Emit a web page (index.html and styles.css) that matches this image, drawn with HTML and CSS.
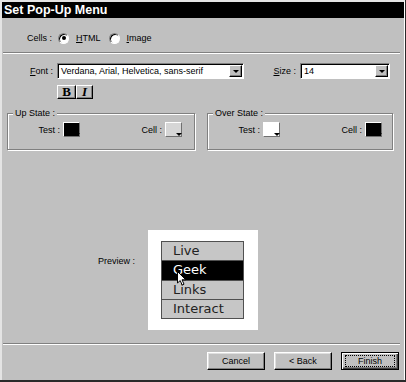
FILE: index.html
```html
<!DOCTYPE html>
<html lang="en">

<head>
    <meta charset="UTF-8">
    <title>Set Pop-Up Menu</title>
    <link rel="stylesheet" href="styles.css">
</head>

<body>
    <div class="dialog">
        <div class="title-bar">Set Pop-Up Menu</div>

        <div class="cells-row">
            <span class="cells-label">Cells :</span>
            <label class="radio-option">
                <span class="radio checked"></span><u>H</u>TML
            </label>
            <label class="radio-option">
                <span class="radio"></span><u>I</u>mage
            </label>
        </div>

        <div class="separator"></div>

        <div class="font-row">
            <span class="font-label"><u>F</u>ont :</span>
            <div class="combo font-combo">
                <span class="combo-text">Verdana, Arial, Helvetica, sans-serif</span>
                <span class="combo-btn"></span>
            </div>
            <span class="size-label"><u>S</u>ize :</span>
            <div class="combo size-combo">
                <span class="combo-text">14</span>
                <span class="combo-btn"></span>
            </div>
        </div>

        <div class="style-row">
            <span class="style-btn bold">B</span>
            <span class="style-btn italic">I</span>
        </div>

        <div class="states">
            <div class="group up-state">
                <div class="group-title">Up State :</div>
                <div class="swatch-row">
                    <span class="test-label">Test :</span>
                    <span class="swatch swatch-black"></span>
                    <span class="cell-label">Cell :</span>
                    <span class="swatch swatch-grey"></span>
                </div>
            </div>
            <div class="group over-state">
                <div class="group-title">Over State :</div>
                <div class="swatch-row">
                    <span class="test-label">Test :</span>
                    <span class="swatch swatch-white"></span>
                    <span class="cell-label">Cell :</span>
                    <span class="swatch swatch-black"></span>
                </div>
            </div>
        </div>

        <div class="preview-row">
            <span class="preview-label">Preview :</span>
            <div class="preview-box">
                <div class="menu">
                    <div class="menu-item">Live</div>
                    <div class="menu-item active">Geek</div>
                    <div class="menu-item">Links</div>
                    <div class="menu-item">Interact</div>
                    <!-- mouse pointer over the hovered item -->
                    <svg class="cursor" width="10" height="15" viewBox="0 0 10 15">
                        <path d="M0.5 0.5 L0.5 12 L3.2 9.6 L5.2 14 L7 13.2 L5 8.8 L8.8 8.8 Z" fill="#fff" stroke="#000" stroke-width="1" />
                    </svg>
                </div>
            </div>
        </div>

        <div class="separator bottom-separator"></div>

        <div class="buttons">
            <button class="btn">Cancel</button>
            <button class="btn">&lt; Back</button>
            <button class="btn default"><span class="focus">Finish</span></button>
        </div>
    </div>
</body>

</html>
```

FILE: styles.css
```css
body {
    margin: 0;
    background-color: #2a2a2a;
    font-family: "Liberation Sans", Arial, sans-serif;
    font-size: 9px;
    color: #000;
}

.dialog {
    width: 405px;
    height: 380px;
    box-sizing: border-box;
    background-color: #c0c0c0;
    border-top: 2px solid #e4e4e4;
    border-left: 2px solid #e4e4e4;
    border-right: 1px solid #fff;
    display: flex;
    flex-direction: column;
}

.title-bar {
    height: 16px;
    background-color: #000;
    color: #fff;
    font-size: 12.5px;
    font-weight: bold;
    line-height: 16px;
    padding-left: 2px;
}

.cells-row {
    height: 34px;
    box-sizing: border-box;
    padding: 6px 0 0 25px;
    display: flex;
    align-items: center;
}

.cells-label {
    margin-right: 6px;
}

.radio-option {
    display: flex;
    align-items: center;
    margin-right: 8px;
}

.radio {
    width: 9px;
    height: 9px;
    border-radius: 50%;
    border: 1px solid;
    border-color: #808080 #fff #fff #808080;
    background-color: #fff;
    box-shadow: inset 1px 1px 0 #000;
    display: flex;
    align-items: center;
    justify-content: center;
    margin-right: 7px;
}

.radio.checked::after {
    content: "";
    width: 4px;
    height: 4px;
    border-radius: 50%;
    background-color: #000;
}

.separator {
    height: 1px;
    background-color: #808080;
    border-bottom: 1px solid #fff;
    margin: 0 4px 0 1px;
}

.font-row {
    display: flex;
    align-items: center;
    margin-top: 9px;
    padding-left: 18px;
}

.font-label {
    width: 33px;
    text-align: right;
    margin-right: 4px;
}

.size-label {
    width: 24px;
    text-align: right;
    margin: 0 4px 0 28px;
}

.combo {
    height: 16px;
    box-sizing: border-box;
    background-color: #fff;
    border: 1px solid;
    border-color: #808080 #fff #fff #808080;
    box-shadow: inset 1px 1px 0 #000;
    padding: 1px;
    display: flex;
}

.font-combo {
    width: 187px;
}

.size-combo {
    width: 90px;
}

.combo-text {
    flex: 1;
    padding-left: 2px;
    line-height: 12px;
    white-space: nowrap;
    overflow: hidden;
}

.combo-btn {
    width: 13px;
    box-sizing: border-box;
    background-color: #c0c0c0;
    border: 1px solid;
    border-color: #fff #000 #000 #fff;
    box-shadow: inset -1px -1px 0 #808080;
    display: flex;
    align-items: center;
    justify-content: center;
}

.combo-btn::after {
    content: "";
    border-left: 3px solid transparent;
    border-right: 3px solid transparent;
    border-top: 3px solid #000;
}

.style-row {
    display: flex;
    margin-top: 6px;
    padding-left: 55px;
}

.style-btn {
    width: 19px;
    height: 14px;
    box-sizing: border-box;
    border: 1px solid;
    border-color: #fff #000 #000 #fff;
    box-shadow: inset -1px -1px 0 #808080;
    font-family: "Liberation Serif", "Times New Roman", serif;
    font-size: 13px;
    line-height: 12px;
    text-align: center;
}

.style-btn.bold {
    font-weight: bold;
}

.style-btn.italic {
    width: 17px;
    font-style: italic;
    font-weight: bold;
}

.states {
    display: flex;
    gap: 12px;
    margin-top: 14px;
    padding-left: 5px;
}

.group {
    height: 37px;
    box-sizing: border-box;
    border: 1px solid #808080;
    box-shadow: inset 1px 1px 0 #fff, 1px 1px 0 #fff;
}

.up-state {
    width: 188px;
}

.over-state {
    width: 186px;
}

.group-title {
    width: fit-content;
    margin: -6px 0 0 5px;
    padding: 0 2px;
    background-color: #c0c0c0;
    line-height: 11px;
}

.swatch-row {
    display: flex;
    align-items: center;
    margin-top: 3px;
}

.test-label {
    width: 52px;
    text-align: right;
    margin-right: 3px;
}

.cell-label {
    width: 82px;
    text-align: right;
    margin-right: 3px;
}

.swatch {
    width: 17px;
    height: 15px;
    box-sizing: border-box;
    border: 1px solid;
    border-color: #fff #707070 #707070 #fff;
    position: relative;
}

.swatch::after {
    content: "";
    position: absolute;
    right: -1px;
    bottom: 0;
    border-left: 3px solid transparent;
    border-right: 3px solid transparent;
    border-top: 3px solid #000;
}

.swatch-black {
    background-color: #000;
}

.swatch-grey {
    background-color: #d6d6d6;
}

.swatch-white {
    background-color: #fff;
}

.preview-row {
    display: flex;
    margin-top: 80px;
    padding-left: 93px;
}

.preview-label {
    width: 40px;
    text-align: right;
    margin: 26px 13px 0 0;
}

.preview-box {
    width: 110px;
    height: 100px;
    box-sizing: border-box;
    background-color: #fff;
    padding: 11px 14px 0 13px;
}

.menu {
    border: 1px solid #505050;
    position: relative;
    font-family: "DejaVu Sans", Verdana, sans-serif;
    font-size: 13px;
    color: #222;
}

.menu-item {
    height: 18px;
    line-height: 18px;
    padding-left: 11px;
    background-color: #c6c6c6;
    border-top: 1px solid #505050;
}

.menu-item:first-child {
    border-top: none;
}

.menu-item.active {
    height: 19px;
    background-color: #000;
    color: #fff;
}

.cursor {
    position: absolute;
    left: 15px;
    top: 29px;
}

.bottom-separator {
    margin-top: 13px;
}

.buttons {
    display: flex;
    justify-content: flex-end;
    gap: 9px;
    margin-top: 7px;
    padding-right: 5px;
}

.btn {
    width: 58px;
    height: 18px;
    box-sizing: border-box;
    padding: 0;
    background-color: #c0c0c0;
    border: 1px solid;
    border-color: #fff #000 #000 #fff;
    box-shadow: inset -1px -1px 0 #808080, inset 1px 1px 0 #dfdfdf;
    font-family: "Liberation Sans", Arial, sans-serif;
    font-size: 9px;
    color: #000;
    display: flex;
    align-items: center;
    justify-content: center;
}

.btn.default {
    border: 1px solid #000;
    box-shadow: inset 1px 1px 0 #fff, inset -1px -1px 0 #404040, inset -2px -2px 0 #808080;
}

.btn .focus {
    width: 48px;
    height: 10px;
    line-height: 10px;
    border: 1px dotted #000;
}
```
